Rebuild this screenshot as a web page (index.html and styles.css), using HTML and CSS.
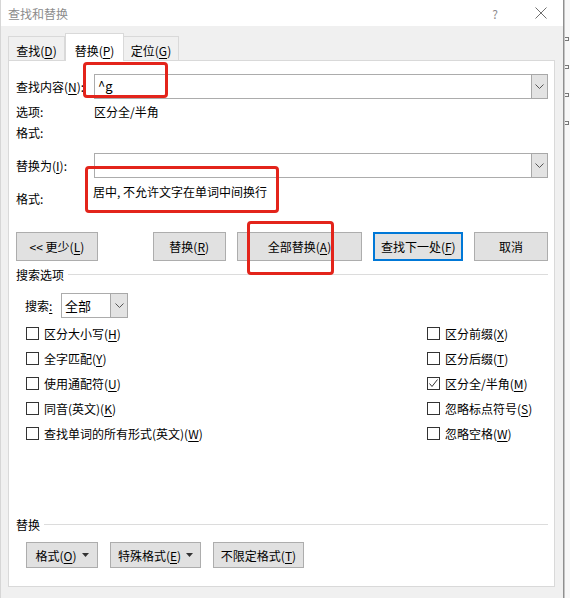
FILE: index.html
```html
<!DOCTYPE html>
<html lang="zh-CN">
  <head>
    <meta charset="UTF-8" />
    <meta name="viewport" content="width=device-width, initial-scale=1.0" />
    <title>查找和替换</title>
    <link rel="stylesheet" href="styles.css">
  </head>
  <body>
    <div class="window">
      <div class="titlebar">
        <span class="title">查找和替换</span>
        <span class="help">?</span>
        <span class="close">
          <svg width="12" height="12" viewBox="0 0 12 12"><path d="M0.5 0.5L11.5 11.5M11.5 0.5L0.5 11.5" stroke="#6f6f6f" stroke-width="1" fill="none"/></svg>
        </span>
      </div>

      <div class="dialog">
        <div class="tabs">
          <div class="tab">查找(<u>D</u>)</div>
          <div class="tab active">替换(<u>P</u>)</div>
          <div class="tab">定位(<u>G</u>)</div>
        </div>

        <div class="panel">
          <div class="field-row find-row">
            <label class="label">查找内容(<u>N</u>):</label>
            <div class="combo">
              <span class="combo-text">^g</span>
              <span class="combo-btn">
                <svg width="9" height="5" viewBox="0 0 9 5"><path d="M0.5 0.5L4.5 4.5L8.5 0.5" stroke="#555" fill="none"/></svg>
              </span>
            </div>
          </div>
          <div class="info-row"><span class="label">选项:</span><span>区分全/半角</span></div>
          <div class="info-row"><span class="label">格式:</span></div>

          <div class="field-row replace-row">
            <label class="label">替换为(<u>I</u>):</label>
            <div class="combo">
              <span class="combo-text"></span>
              <span class="combo-btn">
                <svg width="9" height="5" viewBox="0 0 9 5"><path d="M0.5 0.5L4.5 4.5L8.5 0.5" stroke="#555" fill="none"/></svg>
              </span>
            </div>
          </div>
          <div class="format-row">
            <span class="label">格式:</span>
            <span class="format-value">居中, 不允许文字在单词中间换行</span>
          </div>

          <div class="buttons">
            <button class="btn btn-less">&lt;&lt; 更少(<u>L</u>)</button>
            <button class="btn btn-replace">替换(<u>R</u>)</button>
            <button class="btn btn-all">全部替换(<u>A</u>)</button>
            <button class="btn btn-next">查找下一处(<u>F</u>)</button>
            <button class="btn btn-cancel">取消</button>
          </div>

          <div class="group-title"><span>搜索选项</span></div>

          <div class="search-row">
            <span class="search-label">搜索<u>:</u></span>
            <div class="select">
              <span class="select-text">全部</span>
              <span class="select-btn">
                <svg width="9" height="5" viewBox="0 0 9 5"><path d="M0.5 0.5L4.5 4.5L8.5 0.5" stroke="#555" fill="none"/></svg>
              </span>
            </div>
          </div>

          <div class="options">
            <div class="col">
              <div class="opt"><span class="check"></span>区分大小写(<u>H</u>)</div>
              <div class="opt"><span class="check"></span>全字匹配(<u>Y</u>)</div>
              <div class="opt"><span class="check"></span>使用通配符(<u>U</u>)</div>
              <div class="opt"><span class="check"></span>同音(英文)(<u>K</u>)</div>
              <div class="opt"><span class="check"></span>查找单词的所有形式(英文)(<u>W</u>)</div>
            </div>
            <div class="col col-right">
              <div class="opt"><span class="check"></span>区分前缀(<u>X</u>)</div>
              <div class="opt"><span class="check"></span>区分后缀(<u>T</u>)</div>
              <div class="opt">
                <span class="check checked">
                  <svg width="11" height="11" viewBox="0 0 11 11"><path d="M1.5 5.5L4 8.5L9.5 1.5" stroke="#333" stroke-width="1" fill="none"/></svg>
                </span>区分全/半角(<u>M</u>)
              </div>
              <div class="opt"><span class="check"></span>忽略标点符号(<u>S</u>)</div>
              <div class="opt"><span class="check"></span>忽略空格(<u>W</u>)</div>
            </div>
          </div>

          <div class="group-title replace-group"><span>替换</span></div>

          <div class="bottom-buttons">
            <button class="btn btn-format">格式(<u>O</u>)
              <svg class="caret" width="7" height="4" viewBox="0 0 7 4"><path d="M0 0H7L3.5 4Z" fill="#333"/></svg>
            </button>
            <button class="btn btn-special">特殊格式(<u>E</u>)
              <svg class="caret" width="7" height="4" viewBox="0 0 7 4"><path d="M0 0H7L3.5 4Z" fill="#333"/></svg>
            </button>
            <button class="btn btn-noformat">不限定格式(<u>T</u>)</button>
          </div>
        </div>
      </div>

      <!-- annotation boxes -->
      <div class="mark mark-find"></div>
      <div class="mark mark-format"></div>
      <div class="mark mark-all"></div>
    </div>
    <div class="edge">
      <span class="tick"></span>
      <span class="tick"></span>
      <span class="tick"></span>
      <span class="tick"></span>
    </div>
  </body>
</html>
```

FILE: styles.css
```css
* {
  margin: 0;
  padding: 0;
  box-sizing: border-box;
  font-family: "Noto Sans CJK SC", "Noto Sans", sans-serif;
}
body {
  display: flex;
  width: 570px;
  height: 598px;
  overflow: hidden;
  background: #f0f0f0;
  font-size: 12px;
  color: #000;
}
u {
  text-decoration: underline;
  text-underline-offset: 2px;
}

.window {
  position: relative;
  width: 564px;
  height: 598px;
  background: #f0f0f0;
  border-right: 1px solid #8f8f8f;
  border-left: 1px solid #d6d6d6;
}

.titlebar {
  height: 26px;
  background: #fff;
  display: flex;
  align-items: center;
  padding-left: 7px;
}
.title {
  color: #8c8c8c;
  font-size: 12px;
  flex: 1;
}
.help {
  color: #8c8c8c;
  font-size: 12px;
  margin-right: 37px;
}
.close {
  display: flex;
  margin-right: 16px;
}

.dialog {
  padding: 7px 7px 0 7px;
}

.tabs {
  display: flex;
  align-items: flex-end;
  height: 27px;
  position: relative;
  z-index: 1;
}
.tab {
  height: 24px;
  padding-top: 6px;
  line-height: 16px;
  white-space: nowrap;
  text-align: center;
  background: #f0f0f0;
  border: 1px solid #d9d9d9;
  border-bottom: none;
}
.tab:first-child {
  width: 57px;
}
.tab.active {
  width: 59px;
  height: 28px;
  padding-top: 9px;
  background: #fff;
  margin-bottom: -1px;
  border-right: 1px solid #d9d9d9;
}
.tab:last-child {
  width: 55px;
  border-left: none;
}

.panel {
  width: 547px;
  height: 527px;
  background: #fff;
  border: 1px solid #d9d9d9;
  padding: 0 6px 0 7px;
}

.label {
  width: 78px;
  flex: none;
}

.field-row {
  display: flex;
  align-items: center;
  height: 25px;
}
.find-row {
  margin-top: 13px;
}
.replace-row {
  margin-top: 10px;
}
.combo {
  flex: 1;
  height: 25px;
  display: flex;
  border: 1px solid #acacac;
  background: #fff;
}
.combo-text {
  flex: 1;
  padding-left: 3px;
  line-height: 22px;
  font-size: 13px;
}
.combo-btn {
  width: 17px;
  margin: -1px -1px -1px 0;
  background: #e3e3e3;
  border: 1px solid #a8a8a8;
  display: flex;
  align-items: center;
  justify-content: center;
}

.info-row {
  display: flex;
  height: 21px;
  line-height: 21px;
}
.info-row:nth-of-type(2) {
  margin-top: 2px;
}

.format-row {
  display: flex;
  height: 34px;
  align-items: flex-start;
}
.format-row .label {
  margin-top: 11px;
  line-height: 20px;
  width: 77px;
}
.format-value {
  margin-top: 4px;
  line-height: 20px;
}

.btn {
  height: 29px;
  background: #e1e1e1;
  border: 1px solid #adadad;
  font-size: 12px;
  color: #000;
  text-align: center;
  white-space: nowrap;
  display: flex;
  align-items: center;
  justify-content: center;
}
.buttons {
  display: flex;
  margin-top: 20px;
  gap: 11px;
}
.btn-less {
  width: 82px;
  margin-right: 44px;
}
.btn-replace {
  width: 73px;
}
.btn-all {
  width: 126px;
}
.btn-next {
  width: 90px;
  border: 2px solid #0078d7;
}
.btn-cancel {
  width: 74px;
}

.group-title {
  display: flex;
  align-items: center;
  height: 18px;
  margin-top: 4px;
}
.group-title::after {
  content: "";
  flex: 1;
  height: 1px;
  background: #dcdcdc;
  margin-left: 4px;
}

.search-row {
  display: flex;
  align-items: center;
  margin-top: 10px;
  padding-left: 9px;
}
.search-label {
  width: 36px;
}
.select {
  width: 67px;
  height: 25px;
  display: flex;
  border: 1px solid #acacac;
}
.select-text {
  flex: 1;
  padding-left: 3px;
  line-height: 23px;
  font-size: 13px;
}
.select-btn {
  width: 18px;
  margin: -1px -1px -1px 0;
  background: #e3e3e3;
  border: 1px solid #a8a8a8;
  display: flex;
  align-items: center;
  justify-content: center;
}

.options {
  display: flex;
  margin-top: 3px;
  padding-left: 10px;
}
.col {
  flex: 1;
}
.col-right {
  flex: none;
  width: 121px;
}
.opt {
  height: 25px;
  display: flex;
  align-items: center;
}
.check {
  width: 13px;
  height: 13px;
  border: 1px solid #333;
  background: #fff;
  margin-right: 5px;
  display: flex;
  align-items: center;
  justify-content: center;
}

.replace-group {
  margin-top: 69px;
}

.bottom-buttons {
  display: flex;
  gap: 12px;
  margin-top: 9px;
  padding-left: 10px;
}
.bottom-buttons .btn {
  height: 26px;
}
.btn-format {
  width: 72px;
}
.btn-special {
  width: 91px;
}
.btn-noformat {
  width: 91px;
}
.caret {
  margin-left: 5px;
}

/* red annotation boxes */
.mark {
  position: absolute;
  border: 3px solid #e3241b;
  border-radius: 4px;
}
.mark-find {
  left: 82px;
  top: 62px;
  width: 85px;
  height: 36px;
}
.mark-format {
  left: 84px;
  top: 166px;
  width: 194px;
  height: 47px;
}
.mark-all {
  left: 246px;
  top: 221px;
  width: 87px;
  height: 54px;
}

.edge {
  flex: 1;
  background: #f7f7f7;
  border-left: 1px solid #c4c4c4;
  display: flex;
  flex-direction: column;
  padding-top: 37px;
  gap: 24px;
}
.tick {
  width: 4px;
  height: 4px;
  border: 1px solid #777;
  border-left: none;
}
```
